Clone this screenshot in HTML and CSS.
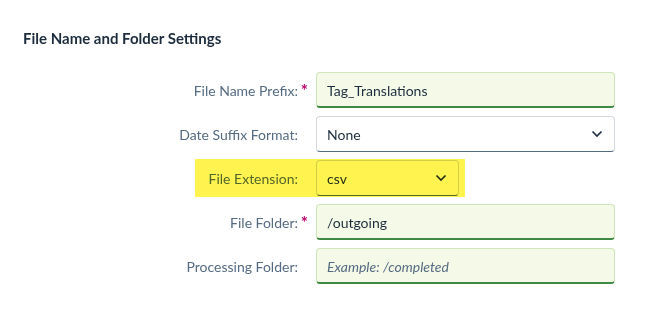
FILE: index.html
```html
<!DOCTYPE html>
<html lang="en">
<head>
  <meta charset="UTF-8">
  <title>File Name and Folder Settings</title>
  <link rel="stylesheet" href="styles.css">
</head>
<body>

<div class="panel">
  <h2 class="panel-title">File Name and Folder Settings</h2>

  <div class="form">
    <div class="form-row">
      <label class="form-label required">File Name Prefix:</label>
      <div class="field field-ok">Tag_Translations</div>
    </div>

    <div class="form-row">
      <label class="form-label">Date Suffix Format:</label>
      <div class="field field-select">
        <span>None</span>
        <svg class="chev" width="12" height="8" viewBox="0 0 12 8"><path d="M1.5 1.5 L6 6 L10.5 1.5" fill="none" stroke="#1d2d3e" stroke-width="1.6"/></svg>
      </div>
    </div>

    <div class="form-row marked">
      <label class="form-label">File Extension:</label>
      <div class="field field-select field-short">
        <span>csv</span>
        <svg class="chev" width="12" height="8" viewBox="0 0 12 8"><path d="M1.5 1.5 L6 6 L10.5 1.5" fill="none" stroke="#1d2d3e" stroke-width="1.6"/></svg>
      </div>
    </div>

    <div class="form-row">
      <label class="form-label required">File Folder:</label>
      <div class="field field-ok">/outgoing</div>
    </div>

    <div class="form-row">
      <label class="form-label">Processing Folder:</label>
      <div class="field field-ok placeholder">Example: /completed</div>
    </div>
  </div>
</div>

</body>
</html>
```

FILE: styles.css
```css
* {
  margin: 0;
  padding: 0;
  box-sizing: border-box;
}

body {
  background: #fff;
  font-family: Lato, "Liberation Sans", sans-serif;
  color: #1d2d3e;
}

.panel {
  padding: 29px 0 0 23px;
}

.panel-title {
  font-size: 15px;
  font-weight: bold;
  color: #1d2d3e;
  line-height: 19px;
}

.form {
  display: flex;
  flex-direction: column;
  gap: 8px;
  margin-top: 24px;
  margin-left: -7px;
}

.form-row {
  display: flex;
  align-items: center;
  gap: 8px;
  height: 36px;
}

.form-label {
  width: 292px;
  text-align: right;
  padding-right: 10px;
  font-size: 14px;
  color: #556b82;
  position: relative;
}

.form-label.required::after {
  content: "*";
  position: absolute;
  right: 0;
  top: -2px;
  color: #ba066c;
  font-size: 17px;
  font-weight: bold;
}

.field {
  width: 299px;
  height: 36px;
  border-radius: 4px;
  padding: 0 10px;
  display: flex;
  align-items: center;
  font-size: 14px;
  color: #1d2d3e;
}

.field-ok {
  background: #f5fae8;
  border: 1px solid #cfe5bb;
  border-bottom: 2px solid #3f8a45;
  padding-top: 1px;
}

.field-select {
  background: #fff;
  border: 1px solid #d3d8dd;
  border-bottom: 1px solid #556b82;
  justify-content: space-between;
  padding-right: 11px;
}

.field-short {
  width: 143px;
}

.placeholder {
  font-style: italic;
  color: #556b82;
}

.marked {
  position: relative;
}

.marked::after {
  content: "";
  position: absolute;
  left: 179px;
  top: -1px;
  width: 270px;
  height: 38px;
  background: #fff44f;
  mix-blend-mode: multiply;
}
```
